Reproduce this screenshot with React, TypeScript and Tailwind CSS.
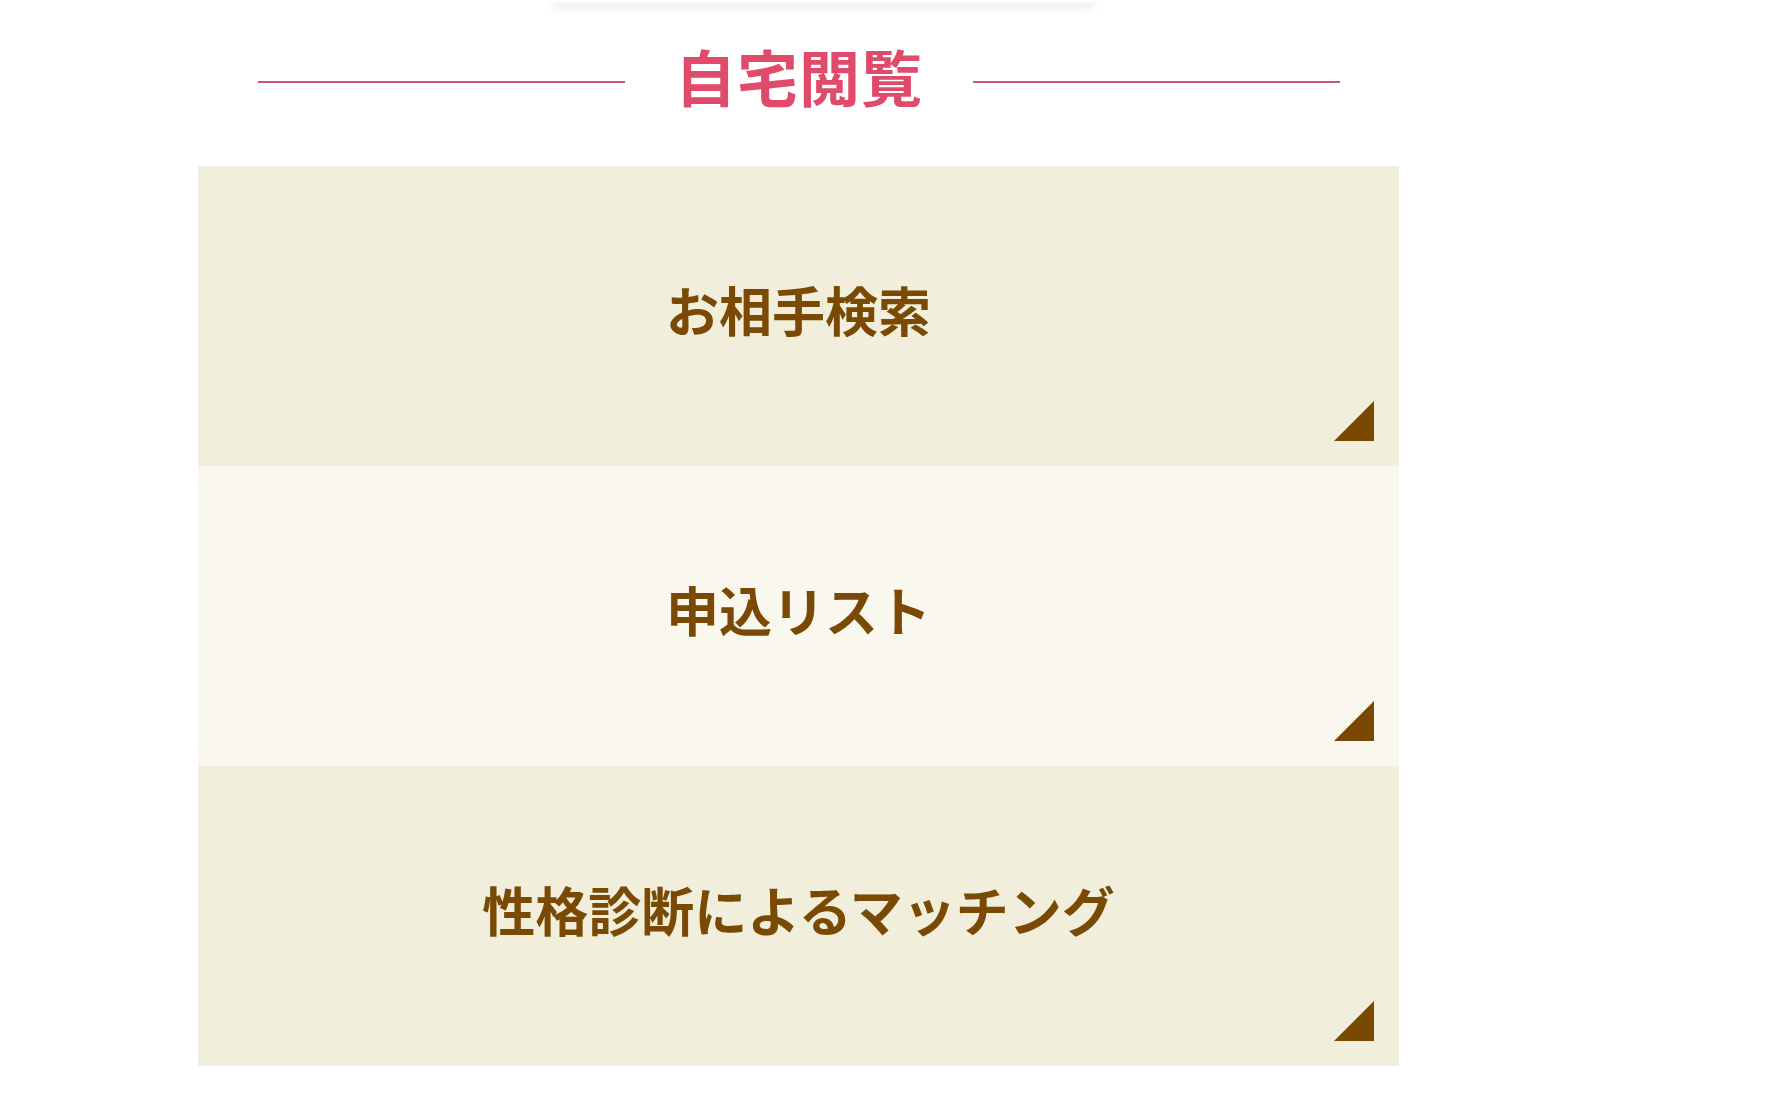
const ITEMS = [
  { label: 'お相手検索', bg: 'bg-[#f1eedb]' },
  { label: '申込リスト', bg: 'bg-[#f9f7ee]' },
  { label: '性格診断によるマッチング', bg: 'bg-[#f1eedb]' },
]

function Corner() {
  return (
    <svg width="40" height="40" viewBox="0 0 40 40" className="absolute right-[25px] bottom-[25px]">
      <polygon points="40,0 40,40 0,40" fill="#7a4800" />
    </svg>
  )
}

export default function App() {
  return (
    <div className="min-h-[1120px] bg-white font-['Noto_Sans_CJK_JP','Noto_Sans',sans-serif]">
      {/* card above, mostly scrolled out */}
      <div className="ml-[553px] w-[540px] h-[2px] bg-white shadow-[0_4px_10px_rgba(0,0,0,0.28)]" />

      <div className="ml-[198px] w-[1201px]">
        {/* heading */}
        <div className="flex items-center ml-[60px] w-[1082px] pt-[38px] pb-[54px]">
          <span className="flex-1 h-[2px] bg-[#c95672] translate-y-[6px]" />
          <h2 className="px-[50px] text-[61px] leading-[72px] font-bold text-[#e04a6b] tracking-[1px]">自宅閲覧</h2>
          <span className="flex-1 h-[2px] bg-[#c95672] translate-y-[6px]" />
        </div>

        {/* menu */}
        <ul>
          {ITEMS.map((item) => (
            <li key={item.label}>
              <a
                href="#"
                className={`relative flex h-[300px] items-center justify-center pb-[12px] text-[53px] font-bold text-[#7a4a05] ${item.bg}`}
              >
                {item.label}
                <Corner />
              </a>
            </li>
          ))}
        </ul>
      </div>
    </div>
  )
}
